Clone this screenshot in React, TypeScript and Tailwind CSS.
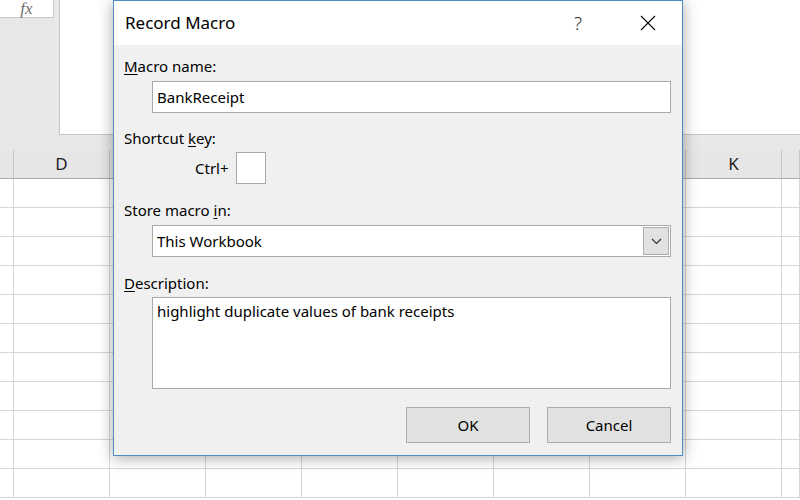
import React from 'react';

const FONT = { fontFamily: '"Segoe UI", "Noto Sans", "Open Sans", sans-serif' };

const columns = ['C', 'D', 'E', 'F', 'G', 'H', 'I', 'J', 'K', 'L'];
const shown: Record<string, boolean> = { D: true, K: true };

const Sheet: React.FC = () => {
  const rows = [...Array(11)];
  return (
    <div className="flex flex-col w-full h-full bg-white">
      {/* formula bar area */}
      <div className="flex h-[150px] bg-[#e8e8e8] shrink-0">
        <div className="w-[59px] shrink-0">
          <div className="w-[54px] h-[18px] bg-white border-r border-b border-[#c8c8c8] flex items-center justify-center">
            <span className="italic text-[#6e6e6e] text-[17px] leading-none" style={{ fontFamily: '"Liberation Serif", serif' }}>fx</span>
          </div>
        </div>
        <div className="flex-1 h-[135px] bg-white border-l border-b border-[#c6c6c6]" />
      </div>

      {/* column headers */}
      <div className="grid grid-cols-[14px_repeat(8,96px)_1fr] h-[29px] bg-[#e6e6e6] border-b border-[#ababab] shrink-0">
        {columns.map((c) => (
          <div key={c} className="border-r border-[#c6c6c6] flex items-center justify-center text-[17px] text-[#222]">
            {shown[c] ? c : ''}
          </div>
        ))}
      </div>

      {/* cells */}
      <div className="flex-1 overflow-hidden">
        {rows.map((_, r) => (
          <div key={r} className="grid grid-cols-[14px_repeat(8,96px)_1fr] h-[29px]">
            {columns.map((c) => (
              <div key={c} className="border-r border-b border-[#d6d6d6]" />
            ))}
          </div>
        ))}
      </div>
    </div>
  );
};

const Label: React.FC<{ pre?: string; u: string; post: string }> = ({ pre = '', u, post }) => (
  <div className="text-[15px] leading-[20px] text-black">
    {pre}
    <span className="underline underline-offset-2">{u}</span>
    {post}
  </div>
);

const Field: React.FC<{ className?: string; children?: React.ReactNode }> = ({ className = '', children }) => (
  <div className={`ml-[28px] bg-white border border-[#a9a9a9] ${className}`}>{children}</div>
);

const RecordMacroDialog: React.FC = () => (
  <div className="absolute left-[113px] top-0 w-[570px] h-[456px] flex flex-col border border-[#4f8cc4] bg-[#f0f0f0] shadow-[0_2px_14px_rgba(0,0,0,0.35)]">
    {/* title bar */}
    <div className="h-[44px] bg-white flex items-center shrink-0">
      <div className="pl-[11px] text-[17px] text-black flex-1">Record Macro</div>
      <div className="w-[70px] text-center text-[19px] text-[#333] font-light">?</div>
      <div className="w-[70px] mr-[-1px] flex items-center justify-center">
        <svg width="16" height="16" viewBox="0 0 16 16" className="text-black">
          <path d="M1 1 L15 15 M15 1 L1 15" stroke="currentColor" strokeWidth="1.1" />
        </svg>
      </div>
    </div>

    {/* body */}
    <div className="flex-1 flex flex-col pl-[10px] pr-[11px] pt-[11px]">
      <Label u="M" post="acro name:" />
      <Field className="mt-[5px] h-[32px] flex items-center pl-[4px] text-[15px] text-black">BankReceipt</Field>

      <div className="mt-[15px]">
        <Label pre="Shortcut " u="k" post="ey:" />
      </div>
      <div className="mt-[4px] flex items-center">
        <span className="ml-[71px] w-[41px] text-[15px] text-black">Ctrl+</span>
        <div className="w-[30px] h-[32px] bg-white border border-[#a9a9a9]" />
      </div>

      <div className="mt-[16px]">
        <Label pre="Store macro " u="i" post="n:" />
      </div>
      <Field className="mt-[5px] h-[32px] flex items-center pl-[4px] pr-[1px] text-[15px] text-black">
        <span className="flex-1">This Workbook</span>
        <div className="w-[26px] h-[28px] bg-[#e1e1e1] border border-[#adadad] flex items-center justify-center">
          <svg width="11" height="7" viewBox="0 0 11 7">
            <path d="M1 1 L5.5 5.5 L10 1" fill="none" stroke="#333" strokeWidth="1.2" />
          </svg>
        </div>
      </Field>

      <div className="mt-[16px]">
        <Label u="D" post="escription:" />
      </div>
      <Field className="mt-[4px] h-[92px] pl-[4px] pt-[2px] text-[15px] text-black">
        highlight duplicate values of bank receipts
      </Field>

      <div className="mt-[18px] flex justify-end gap-[17px]">
        <button className="w-[124px] h-[36px] bg-[#e1e1e1] border border-[#adadad] text-[15px] text-black">OK</button>
        <button className="w-[124px] h-[36px] bg-[#e1e1e1] border border-[#adadad] text-[15px] text-black">Cancel</button>
      </div>
    </div>
  </div>
);

export default function App() {
  return (
    <div className="relative w-[800px] h-[500px] overflow-hidden" style={FONT}>
      <Sheet />
      <RecordMacroDialog />
    </div>
  );
}
